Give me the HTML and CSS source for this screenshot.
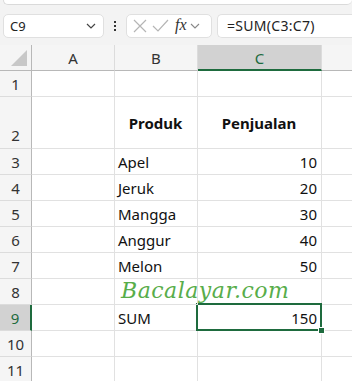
FILE: index.html
```html
<!DOCTYPE html>
<html>
<head>
<meta charset="utf-8">
<link rel="stylesheet" href="styles.css">
</head>
<body>
<div class="app">
  <div class="ribbon-edge"></div>
  <div class="fbar">
    <div class="namebox">
      <span class="nb-text">C9</span>
      <svg class="chev" width="10" height="6" viewBox="0 0 10 6"><path d="M1 1 L5 5 L9 1" fill="none" stroke="#444" stroke-width="1.2"/></svg>
    </div>
    <div class="dots"><span></span><span></span><span></span></div>
    <div class="fx-box">
      <svg class="ic" width="14" height="14" viewBox="0 0 14 14"><path d="M1 1 L13 13 M13 1 L1 13" stroke="#b5b5b5" stroke-width="1.2" fill="none"/></svg>
      <svg class="ic" width="17" height="14" viewBox="0 0 17 14"><path d="M1 7 L6 12 L16 1" stroke="#b5b5b5" stroke-width="1.2" fill="none"/></svg>
      <span class="fx">fx</span>
      <svg class="chev2" width="10" height="6" viewBox="0 0 10 6"><path d="M1 1 L5 5 L9 1" fill="none" stroke="#888" stroke-width="1.1"/></svg>
    </div>
    <div class="formula">=SUM(C3:C7)</div>
  </div>
  <div class="sheet">
    <div class="h corner"><div class="tri"></div></div>
    <div class="h col">A</div>
    <div class="h col">B</div>
    <div class="h col sel-col">C</div>
    <div class="h col last"></div>

    <div class="h rh">1</div><div class="c"></div><div class="c"></div><div class="c"></div><div class="c last"></div>
    <div class="h rh bottom">2</div><div class="c"></div><div class="c head">Produk</div><div class="c head">Penjualan</div><div class="c last"></div>
    <div class="h rh">3</div><div class="c"></div><div class="c">Apel</div><div class="c num">10</div><div class="c last"></div>
    <div class="h rh">4</div><div class="c"></div><div class="c">Jeruk</div><div class="c num">20</div><div class="c last"></div>
    <div class="h rh">5</div><div class="c"></div><div class="c">Mangga</div><div class="c num">30</div><div class="c last"></div>
    <div class="h rh">6</div><div class="c"></div><div class="c">Anggur</div><div class="c num">40</div><div class="c last"></div>
    <div class="h rh">7</div><div class="c"></div><div class="c">Melon</div><div class="c num">50</div><div class="c last"></div>
    <div class="h rh">8</div><div class="c"></div><div class="c wm-host"><span class="watermark">Bacalayar.com</span></div><div class="c"></div><div class="c last"></div>
    <div class="h rh sel-row">9</div><div class="c"></div><div class="c">SUM</div><div class="c num active">150<span class="selbox"></span><span class="handle"></span></div><div class="c last"></div>
    <div class="h rh">10</div><div class="c"></div><div class="c"></div><div class="c"></div><div class="c last"></div>
    <div class="h rh">11</div><div class="c"></div><div class="c"></div><div class="c"></div><div class="c last"></div>
  </div>
</div>
</body>
</html>
```

FILE: styles.css
```css
html, body {
  margin: 0;
  padding: 0;
  width: 352px;
  height: 381px;
  overflow: hidden;
  background: #ffffff;
  font-family: "Noto Sans", "Open Sans", sans-serif;
}
.app {
  width: 352px;
  height: 381px;
  background: #f3f3f3;
  overflow: hidden;
}
.ribbon-edge {
  height: 4px;
  margin-left: 3px;
  background: #ffffff;
  border: 1px solid #dadada;
  border-top: none;
  border-radius: 0 0 5px 5px;
  border-right: none;
}
.fbar {
  display: flex;
  align-items: center;
  height: 40px;
  padding-left: 3px;
  box-sizing: border-box;
  padding-top: 1px;
}
.namebox {
  width: 101px;
  height: 24px;
  box-sizing: border-box;
  background: #fff;
  border: 1px solid #e0e0e0;
  border-radius: 5px;
  display: flex;
  align-items: center;
  justify-content: space-between;
  padding: 0 7px 0 6px;
  font-size: 13px;
  color: #222;
}
.chev { margin-top: 1px; }
.dots {
  width: 22px;
  display: flex;
  flex-direction: column;
  align-items: center;
  gap: 2px;
}
.dots span {
  width: 2px;
  height: 2px;
  background: #333;
}
.fx-box {
  width: 86px;
  height: 24px;
  box-sizing: border-box;
  background: #fff;
  border: 1px solid #e0e0e0;
  border-radius: 5px;
  display: flex;
  align-items: center;
  padding-left: 6px;
}
.fx-box .ic { margin-right: 5px; }
.fx-box .ic + .ic { margin-right: 6px; }
.fx {
  font-family: "Liberation Serif", "DejaVu Serif", serif;
  font-style: italic;
  font-size: 16px;
  color: #333;
  margin-right: 3px;
  margin-top: -2px;
}
.chev2 { margin-top: 1px; }
.formula {
  margin-left: 5px;
  flex: 1;
  height: 24px;
  box-sizing: border-box;
  background: #fff;
  border: 1px solid #e0e0e0;
  border-right: none;
  border-radius: 5px 0 0 5px;
  display: flex;
  align-items: center;
  padding-left: 9px;
  font-size: 14px;
  letter-spacing: 0.3px;
  color: #222;
}
.sheet {
  display: grid;
  grid-template-columns: 32px 83px 83px 124px 30px;
  grid-template-rows: 26px 26px 52px repeat(9, 26px);
  background: #fff;
}
.h {
  background: #f5f5f5;
  color: #333;
  font-size: 15px;
  box-sizing: border-box;
  border-right: 1px solid #dcdcdc;
  border-bottom: 1px solid #dcdcdc;
  display: flex;
  align-items: center;
  justify-content: center;
}
.col {
  border-bottom: 1px solid #b8b8b8;
  padding-top: 1px;
}
.corner {
  border-right: 1px solid #b8b8b8;
  border-bottom: 1px solid #b8b8b8;
  position: relative;
}
.tri {
  position: absolute;
  right: 4px;
  bottom: 4px;
  width: 0;
  height: 0;
  border-left: 16px solid transparent;
  border-bottom: 16px solid #c8c8c8;
}
.col.last { border-right: none; }
.sel-col {
  background: #d2d2d2;
  color: #1e6b3e;
  border-bottom: 2px solid #1e6b3e;
}
.rh {
  border-right: 1px solid #b8b8b8;
  justify-content: center;
}
.rh.bottom {
  align-items: flex-end;
  padding-bottom: 3px;
}
.sel-row {
  background: #d2d2d2;
  color: #1e6b3e;
  border-right: 2px solid #1e6b3e;
}
.c {
  box-sizing: border-box;
  border-right: 1px solid #e1e1e1;
  border-bottom: 1px solid #e1e1e1;
  font-size: 15px;
  color: #111;
  display: flex;
  align-items: center;
  padding: 0 4px 0 3px;
  white-space: nowrap;
  position: relative;
}
.c.last { border-right: none; }
.head {
  font-weight: bold;
  justify-content: center;
  padding-top: 0;
}
.num { justify-content: flex-end; }
.active { z-index: 2; }
.selbox {
  position: absolute;
  left: -2px;
  top: -2px;
  right: -1px;
  bottom: -1px;
  border: 2px solid #1e6b3e;
}
.handle {
  position: absolute;
  right: -4px;
  bottom: -4px;
  width: 5px;
  height: 5px;
  background: #1e6b3e;
  border: 1px solid #fff;
}
.wm-host { overflow: visible; z-index: 3; }
.watermark {
  position: absolute;
  left: 6px;
  top: -1px;
  font-family: "DejaVu Serif", "Liberation Serif", serif;
  font-style: italic;
  font-size: 22px;
  color: #58ad4a;
  letter-spacing: 0.5px;
}
```
